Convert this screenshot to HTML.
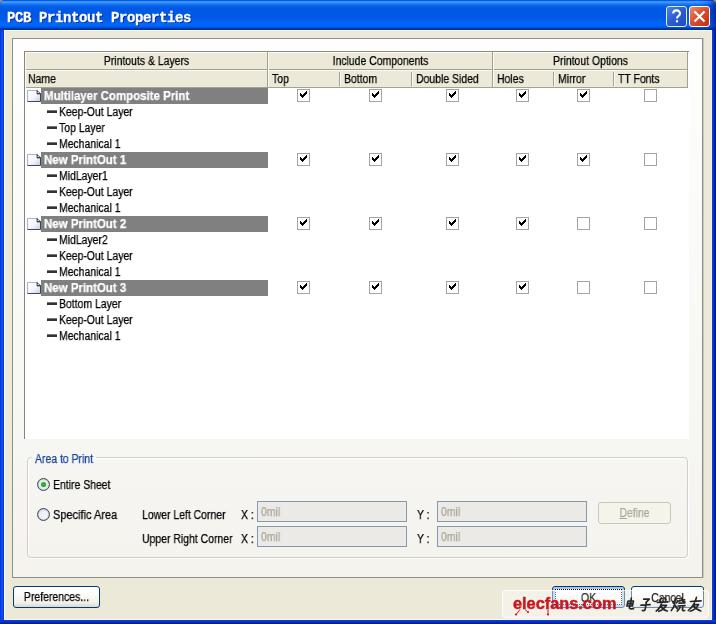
<!DOCTYPE html>
<html>
<head>
<meta charset="utf-8">
<title>PCB Printout Properties</title>
<style>
html,body{margin:0;padding:0;}
body{width:716px;height:624px;overflow:hidden;background:#8c8e8c;font-family:"Liberation Sans",sans-serif;font-size:12.5px;color:#000;position:relative;}
#win{position:absolute;left:0;top:0;width:716px;height:624px;background:#0831d9;overflow:hidden;border-radius:5px 5px 0 0;}
#bl{position:absolute;left:0;top:30px;width:4px;height:594px;background:linear-gradient(to right,#0030d0 0%,#0c48ee 35%,#0c48ee 65%,#0634d4 100%);}
#br{position:absolute;left:712px;top:30px;width:4px;height:594px;background:linear-gradient(to right,#1446e4 0%,#0a30cc 35%,#0020a8 70%,#00178f 100%);}
#bb{position:absolute;left:0;top:620px;width:716px;height:4px;background:linear-gradient(to bottom,#0c3cdc 0%,#0a34d0 35%,#0024b0 70%,#001890 100%);}
#titlebar{position:absolute;left:0;top:0;width:716px;height:30px;
 background:linear-gradient(to bottom,#0055d4 0px,#0a5cdc 1px,#3993ff 1.500px,#3993ff 2.600px,#1a78f4 4px,#0560e8 6px,#0058e4 9px,#0058e6 18px,#0060f0 21px,#0068fc 24px,#0066fa 26px,#0052e0 27.500px,#0038b4 28.500px,#002c94 30px);
 border-radius:5px 5px 0 0;}
#tbr{position:absolute;left:700px;top:0;width:16px;height:30px;background:linear-gradient(to right,rgba(0,30,160,0) 0%,rgba(0,30,160,0.25) 60%,rgba(0,24,140,0.7) 100%);}
#title{position:absolute;left:7px;top:10px;will-change:transform;-webkit-text-stroke:0.3px #fff;font-family:"Liberation Mono",monospace;font-weight:bold;font-size:14px;letter-spacing:-0.4px;line-height:16px;color:#fff;white-space:pre;text-shadow:1px 1px 0 #0a2a90;}
#client{position:absolute;left:4px;top:30px;width:708px;height:590px;background:#ece9d8;box-sizing:border-box;border:1px solid #f9faf6;border-right-color:#eef2f6;}
#panel{position:absolute;left:12px;top:38px;width:691px;height:540px;background:linear-gradient(to bottom,#fefefe 0%,#f8f8f5 55%,#f4f3ee 100%);border:1px solid #8f8f8a;box-sizing:border-box;box-shadow:1px 0 0 #c9c7bc;}
#list{position:absolute;left:24px;top:51px;width:665px;height:388px;background:#fff;box-sizing:border-box;border-left:1px solid #84837c;border-top:1px solid #8c8b82;}
.tb{position:absolute;top:6px;width:21px;height:21px;box-sizing:border-box;border:1px solid #fff;border-radius:3px;}
#bh{left:666px;background:linear-gradient(135deg,#4a82ee 0%,#2a5bd6 50%,#1f48c0 100%);border-color:#dfeafc;}
#bx{left:689px;background:linear-gradient(135deg,#ee8a6c 0%,#d9502f 45%,#bf3111 100%);}

.hdr{position:absolute;background:#ece9d8;box-sizing:border-box;border-right:1px solid #aca899;border-bottom:1px solid #aca899;border-top:1px solid #fff;border-left:1px solid #fff;height:18px;}
.t{position:absolute;white-space:nowrap;will-change:transform;-webkit-text-stroke-width:0.25px;font-size:12.5px;line-height:16px;height:16px;transform:scaleX(0.835);transform-origin:0 50%;}
.tc{transform-origin:50% 50%;text-align:center;}
.bar{position:absolute;left:41px;width:227px;height:16px;background:#808080;}
.bt{position:absolute;left:44px;will-change:transform;-webkit-text-stroke-width:0.25px;color:#fff;font-weight:bold;font-size:12.5px;line-height:16px;height:16px;white-space:nowrap;transform:scaleX(0.917);transform-origin:0 50%;}
.dash{position:absolute;left:47px;width:10px;height:2px;background:#333;border-top:1px solid #777;}
.cb{position:absolute;width:13px;height:13px;box-sizing:border-box;border:1px solid #a5a5a0;background:#fff;}
.cb svg{position:absolute;left:2px;top:0px;display:block;}
.pg{position:absolute;left:27px;width:14px;height:12px;}
.gb{position:absolute;left:27px;top:457px;width:661px;height:101px;box-sizing:border-box;border:1px solid #d0d0c4;border-radius:4px;box-shadow:1px 1px 0 #fff, inset 1px 1px 0 #fff;}
.gbl{position:absolute;left:32px;top:455px;width:64px;height:5px;background:#f7f7f3;}
.blue{color:#17409a;}
.radio{position:absolute;width:13px;height:13px;box-sizing:border-box;border-radius:50%;border:1px solid #3b4c5c;box-shadow:inset 0 0 1px #3b4c5c;background:radial-gradient(circle at 60% 60%,#f4f6fa 0%,#e9ecf2 55%,#dcdfe6 100%);}
.radio.on{background:radial-gradient(circle at 50% 50%,#c9e8c9 0%,#e6f2e6 55%,#eef2ee 100%);}
.radio i{position:absolute;left:3px;top:3px;width:5px;height:5px;border-radius:50%;background:radial-gradient(circle at 45% 40%,#4cb456 0%,#2f9440 60%,#2a8438 100%);}
.inp{position:absolute;width:150px;height:21px;box-sizing:border-box;border:1px solid #8499ae;background:#ebeae6;}
.gt{color:#aca899;}
.btn{position:absolute;width:73px;height:22px;box-sizing:border-box;border:1px solid #003c74;border-radius:3px;background:linear-gradient(to bottom,#ffffff 0%,#fbfbf8 40%,#f1f0e8 80%,#dcd8cb 100%);}
.btn.dis{border-color:#c9c7ba;background:#f5f4ea;}
.btn.def{box-shadow:inset 0 0 0 2px #a9c4ee;}
.focus{position:absolute;box-sizing:border-box;border:1px dotted #000;}
.wm{position:absolute;left:502px;top:590px;width:207px;height:28px;box-sizing:border-box;background:rgba(255,255,255,0.42);border:1px solid rgba(255,255,255,0.8);border-radius:4px;}
.wmt{position:absolute;left:513px;top:594px;font-weight:bold;font-size:16px;line-height:20px;height:20px;color:#c9161f;white-space:nowrap;transform-origin:0 50%;transform:scaleX(1.02);will-change:transform;letter-spacing:0px;-webkit-text-stroke:0.45px #c9161f;}
.bt2{color:#2a2a2a;}
</style>
</head>
<body>
<div id="win">
<div id="titlebar"></div><div id="tbr"></div>
<div id="title">PCB Printout Properties</div>
<div id="bl"></div><div id="br"></div><div id="bb"></div>
<div id="client"></div>
<div class="tb" id="bh"><svg width="19" height="19" viewBox="0 0 19 19"><path d="M6.2 6.6c0-2 1.4-3.2 3.4-3.2s3.4 1.2 3.4 3c0 1.500-.9 2.200-1.900 2.900-.8.600-1.100 1-1.100 2.200" fill="none" stroke="#fff" stroke-width="2.100"/><rect x="8.900" y="13.200" width="2.200" height="2.200" fill="#fff"/></svg></div>
<div class="tb" id="bx"><svg width="19" height="19" viewBox="0 0 19 19"><path d="M4.500 4.500l10 10M14.500 4.500l-10 10" fill="none" stroke="#fff" stroke-width="2.200"/></svg></div>
<div id="panel"></div>
<div id="list"></div>
<div style="position:absolute;left:25px;top:52px;width:663px;height:36px;background:#ece9d8"></div>
<div style="position:absolute;left:25px;top:52px;width:663px;height:1px;background:#fbfaf4"></div>
<div style="position:absolute;left:25px;top:69px;width:663px;height:1px;background:#a4a192"></div>
<div style="position:absolute;left:25px;top:70px;width:663px;height:1px;background:#fbfaf4"></div>
<div style="position:absolute;left:25px;top:87px;width:663px;height:1px;background:#a4a192"></div>
<div style="position:absolute;left:25px;top:52px;width:1px;height:36px;background:#fbfaf4"></div>
<div style="position:absolute;left:267px;top:52px;width:1px;height:36px;background:#a4a192"></div>
<div style="position:absolute;left:268px;top:52px;width:1px;height:35px;background:#fbfaf4"></div>
<div style="position:absolute;left:492px;top:52px;width:1px;height:36px;background:#a4a192"></div>
<div style="position:absolute;left:493px;top:52px;width:1px;height:35px;background:#fbfaf4"></div>
<div style="position:absolute;left:687px;top:52px;width:1px;height:36px;background:#a4a192"></div>
<div style="position:absolute;left:339px;top:72px;width:1px;height:14px;background:#a4a192"></div>
<div style="position:absolute;left:340px;top:72px;width:1px;height:14px;background:#fbfaf4"></div>
<div style="position:absolute;left:411px;top:72px;width:1px;height:14px;background:#a4a192"></div>
<div style="position:absolute;left:412px;top:72px;width:1px;height:14px;background:#fbfaf4"></div>
<div style="position:absolute;left:553px;top:72px;width:1px;height:14px;background:#a4a192"></div>
<div style="position:absolute;left:554px;top:72px;width:1px;height:14px;background:#fbfaf4"></div>
<div style="position:absolute;left:613px;top:72px;width:1px;height:14px;background:#a4a192"></div>
<div style="position:absolute;left:614px;top:72px;width:1px;height:14px;background:#fbfaf4"></div>
<div class="t tc" style="left:25px;top:53px;width:243px">Printouts &amp; Layers</div>
<div class="t tc" style="left:268px;top:53px;width:225px">Include Components</div>
<div class="t tc" style="left:493px;top:53px;width:195px">Printout Options</div>
<div class="t" style="left:28px;top:71px">Name</div>
<div class="t" style="left:272px;top:71px">Top</div>
<div class="t" style="left:344px;top:71px">Bottom</div>
<div class="t" style="left:416px;top:71px">Double Sided</div>
<div class="t" style="left:497px;top:71px">Holes</div>
<div class="t" style="left:558px;top:71px">Mirror</div>
<div class="t" style="left:618px;top:71px">TT Fonts</div>
<div class="bar" style="top:88px"></div>
<svg class="pg" style="top:90px" width="14" height="12" viewBox="0 0 14 12"><defs><linearGradient id="pgg" x1="0" y1="0" x2="1" y2="1"><stop offset="0" stop-color="#ffffff"/><stop offset="0.55" stop-color="#f3f6fb"/><stop offset="1" stop-color="#c3ccdd"/></linearGradient></defs><path d="M0.5 0.5h10l3 3v8h-13z" fill="url(#pgg)" stroke="#a9b2c4" stroke-width="1"/><path d="M13.5 3.5v8h-13" fill="none" stroke="#3d4560" stroke-width="1"/><path d="M10 0.5l3.5 3.500h-3.500z" fill="#3d4560" stroke="#30384e" stroke-width="0.800"/><rect x="10.600" y="1.800" width="1.200" height="1.200" fill="#f4f6fa"/></svg>
<div class="bt" style="top:88px">Multilayer Composite Print</div>
<div class="cb" style="left:297px;top:89px"><svg width="7" height="9" viewBox="0 0 7 9" shape-rendering="crispEdges"><path d="M0 3h1v3h-1zM1 4h1v3h-1zM2 5h1v3h-1zM3 4h1v3h-1zM4 3h1v3h-1zM5 2h1v3h-1zM6 1h1v3h-1z" fill="#000"/></svg></div>
<div class="cb" style="left:369px;top:89px"><svg width="7" height="9" viewBox="0 0 7 9" shape-rendering="crispEdges"><path d="M0 3h1v3h-1zM1 4h1v3h-1zM2 5h1v3h-1zM3 4h1v3h-1zM4 3h1v3h-1zM5 2h1v3h-1zM6 1h1v3h-1z" fill="#000"/></svg></div>
<div class="cb" style="left:446px;top:89px"><svg width="7" height="9" viewBox="0 0 7 9" shape-rendering="crispEdges"><path d="M0 3h1v3h-1zM1 4h1v3h-1zM2 5h1v3h-1zM3 4h1v3h-1zM4 3h1v3h-1zM5 2h1v3h-1zM6 1h1v3h-1z" fill="#000"/></svg></div>
<div class="cb" style="left:516px;top:89px"><svg width="7" height="9" viewBox="0 0 7 9" shape-rendering="crispEdges"><path d="M0 3h1v3h-1zM1 4h1v3h-1zM2 5h1v3h-1zM3 4h1v3h-1zM4 3h1v3h-1zM5 2h1v3h-1zM6 1h1v3h-1z" fill="#000"/></svg></div>
<div class="cb" style="left:577px;top:89px"><svg width="7" height="9" viewBox="0 0 7 9" shape-rendering="crispEdges"><path d="M0 3h1v3h-1zM1 4h1v3h-1zM2 5h1v3h-1zM3 4h1v3h-1zM4 3h1v3h-1zM5 2h1v3h-1zM6 1h1v3h-1z" fill="#000"/></svg></div>
<div class="cb" style="left:644px;top:89px"></div>
<div class="dash" style="top:110px"></div>
<div class="t" style="left:59px;top:104px">Keep-Out Layer</div>
<div class="dash" style="top:126px"></div>
<div class="t" style="left:59px;top:120px">Top Layer</div>
<div class="dash" style="top:142px"></div>
<div class="t" style="left:59px;top:136px">Mechanical 1</div>
<div class="bar" style="top:152px"></div>
<svg class="pg" style="top:154px" width="14" height="12" viewBox="0 0 14 12"><defs><linearGradient id="pgg" x1="0" y1="0" x2="1" y2="1"><stop offset="0" stop-color="#ffffff"/><stop offset="0.55" stop-color="#f3f6fb"/><stop offset="1" stop-color="#c3ccdd"/></linearGradient></defs><path d="M0.5 0.5h10l3 3v8h-13z" fill="url(#pgg)" stroke="#a9b2c4" stroke-width="1"/><path d="M13.5 3.5v8h-13" fill="none" stroke="#3d4560" stroke-width="1"/><path d="M10 0.5l3.5 3.500h-3.500z" fill="#3d4560" stroke="#30384e" stroke-width="0.800"/><rect x="10.600" y="1.800" width="1.200" height="1.200" fill="#f4f6fa"/></svg>
<div class="bt" style="top:152px">New PrintOut 1</div>
<div class="cb" style="left:297px;top:153px"><svg width="7" height="9" viewBox="0 0 7 9" shape-rendering="crispEdges"><path d="M0 3h1v3h-1zM1 4h1v3h-1zM2 5h1v3h-1zM3 4h1v3h-1zM4 3h1v3h-1zM5 2h1v3h-1zM6 1h1v3h-1z" fill="#000"/></svg></div>
<div class="cb" style="left:369px;top:153px"><svg width="7" height="9" viewBox="0 0 7 9" shape-rendering="crispEdges"><path d="M0 3h1v3h-1zM1 4h1v3h-1zM2 5h1v3h-1zM3 4h1v3h-1zM4 3h1v3h-1zM5 2h1v3h-1zM6 1h1v3h-1z" fill="#000"/></svg></div>
<div class="cb" style="left:446px;top:153px"><svg width="7" height="9" viewBox="0 0 7 9" shape-rendering="crispEdges"><path d="M0 3h1v3h-1zM1 4h1v3h-1zM2 5h1v3h-1zM3 4h1v3h-1zM4 3h1v3h-1zM5 2h1v3h-1zM6 1h1v3h-1z" fill="#000"/></svg></div>
<div class="cb" style="left:516px;top:153px"><svg width="7" height="9" viewBox="0 0 7 9" shape-rendering="crispEdges"><path d="M0 3h1v3h-1zM1 4h1v3h-1zM2 5h1v3h-1zM3 4h1v3h-1zM4 3h1v3h-1zM5 2h1v3h-1zM6 1h1v3h-1z" fill="#000"/></svg></div>
<div class="cb" style="left:577px;top:153px"><svg width="7" height="9" viewBox="0 0 7 9" shape-rendering="crispEdges"><path d="M0 3h1v3h-1zM1 4h1v3h-1zM2 5h1v3h-1zM3 4h1v3h-1zM4 3h1v3h-1zM5 2h1v3h-1zM6 1h1v3h-1z" fill="#000"/></svg></div>
<div class="cb" style="left:644px;top:153px"></div>
<div class="dash" style="top:174px"></div>
<div class="t" style="left:59px;top:168px">MidLayer1</div>
<div class="dash" style="top:190px"></div>
<div class="t" style="left:59px;top:184px">Keep-Out Layer</div>
<div class="dash" style="top:206px"></div>
<div class="t" style="left:59px;top:200px">Mechanical 1</div>
<div class="bar" style="top:216px"></div>
<svg class="pg" style="top:218px" width="14" height="12" viewBox="0 0 14 12"><defs><linearGradient id="pgg" x1="0" y1="0" x2="1" y2="1"><stop offset="0" stop-color="#ffffff"/><stop offset="0.55" stop-color="#f3f6fb"/><stop offset="1" stop-color="#c3ccdd"/></linearGradient></defs><path d="M0.5 0.5h10l3 3v8h-13z" fill="url(#pgg)" stroke="#a9b2c4" stroke-width="1"/><path d="M13.5 3.5v8h-13" fill="none" stroke="#3d4560" stroke-width="1"/><path d="M10 0.5l3.5 3.500h-3.500z" fill="#3d4560" stroke="#30384e" stroke-width="0.800"/><rect x="10.600" y="1.800" width="1.200" height="1.200" fill="#f4f6fa"/></svg>
<div class="bt" style="top:216px">New PrintOut 2</div>
<div class="cb" style="left:297px;top:217px"><svg width="7" height="9" viewBox="0 0 7 9" shape-rendering="crispEdges"><path d="M0 3h1v3h-1zM1 4h1v3h-1zM2 5h1v3h-1zM3 4h1v3h-1zM4 3h1v3h-1zM5 2h1v3h-1zM6 1h1v3h-1z" fill="#000"/></svg></div>
<div class="cb" style="left:369px;top:217px"><svg width="7" height="9" viewBox="0 0 7 9" shape-rendering="crispEdges"><path d="M0 3h1v3h-1zM1 4h1v3h-1zM2 5h1v3h-1zM3 4h1v3h-1zM4 3h1v3h-1zM5 2h1v3h-1zM6 1h1v3h-1z" fill="#000"/></svg></div>
<div class="cb" style="left:446px;top:217px"><svg width="7" height="9" viewBox="0 0 7 9" shape-rendering="crispEdges"><path d="M0 3h1v3h-1zM1 4h1v3h-1zM2 5h1v3h-1zM3 4h1v3h-1zM4 3h1v3h-1zM5 2h1v3h-1zM6 1h1v3h-1z" fill="#000"/></svg></div>
<div class="cb" style="left:516px;top:217px"><svg width="7" height="9" viewBox="0 0 7 9" shape-rendering="crispEdges"><path d="M0 3h1v3h-1zM1 4h1v3h-1zM2 5h1v3h-1zM3 4h1v3h-1zM4 3h1v3h-1zM5 2h1v3h-1zM6 1h1v3h-1z" fill="#000"/></svg></div>
<div class="cb" style="left:577px;top:217px"></div>
<div class="cb" style="left:644px;top:217px"></div>
<div class="dash" style="top:238px"></div>
<div class="t" style="left:59px;top:232px">MidLayer2</div>
<div class="dash" style="top:254px"></div>
<div class="t" style="left:59px;top:248px">Keep-Out Layer</div>
<div class="dash" style="top:270px"></div>
<div class="t" style="left:59px;top:264px">Mechanical 1</div>
<div class="bar" style="top:280px"></div>
<svg class="pg" style="top:282px" width="14" height="12" viewBox="0 0 14 12"><defs><linearGradient id="pgg" x1="0" y1="0" x2="1" y2="1"><stop offset="0" stop-color="#ffffff"/><stop offset="0.55" stop-color="#f3f6fb"/><stop offset="1" stop-color="#c3ccdd"/></linearGradient></defs><path d="M0.5 0.5h10l3 3v8h-13z" fill="url(#pgg)" stroke="#a9b2c4" stroke-width="1"/><path d="M13.5 3.5v8h-13" fill="none" stroke="#3d4560" stroke-width="1"/><path d="M10 0.5l3.5 3.500h-3.500z" fill="#3d4560" stroke="#30384e" stroke-width="0.800"/><rect x="10.600" y="1.800" width="1.200" height="1.200" fill="#f4f6fa"/></svg>
<div class="bt" style="top:280px">New PrintOut 3</div>
<div class="cb" style="left:297px;top:281px"><svg width="7" height="9" viewBox="0 0 7 9" shape-rendering="crispEdges"><path d="M0 3h1v3h-1zM1 4h1v3h-1zM2 5h1v3h-1zM3 4h1v3h-1zM4 3h1v3h-1zM5 2h1v3h-1zM6 1h1v3h-1z" fill="#000"/></svg></div>
<div class="cb" style="left:369px;top:281px"><svg width="7" height="9" viewBox="0 0 7 9" shape-rendering="crispEdges"><path d="M0 3h1v3h-1zM1 4h1v3h-1zM2 5h1v3h-1zM3 4h1v3h-1zM4 3h1v3h-1zM5 2h1v3h-1zM6 1h1v3h-1z" fill="#000"/></svg></div>
<div class="cb" style="left:446px;top:281px"><svg width="7" height="9" viewBox="0 0 7 9" shape-rendering="crispEdges"><path d="M0 3h1v3h-1zM1 4h1v3h-1zM2 5h1v3h-1zM3 4h1v3h-1zM4 3h1v3h-1zM5 2h1v3h-1zM6 1h1v3h-1z" fill="#000"/></svg></div>
<div class="cb" style="left:516px;top:281px"><svg width="7" height="9" viewBox="0 0 7 9" shape-rendering="crispEdges"><path d="M0 3h1v3h-1zM1 4h1v3h-1zM2 5h1v3h-1zM3 4h1v3h-1zM4 3h1v3h-1zM5 2h1v3h-1zM6 1h1v3h-1z" fill="#000"/></svg></div>
<div class="cb" style="left:577px;top:281px"></div>
<div class="cb" style="left:644px;top:281px"></div>
<div class="dash" style="top:302px"></div>
<div class="t" style="left:59px;top:296px">Bottom Layer</div>
<div class="dash" style="top:318px"></div>
<div class="t" style="left:59px;top:312px">Keep-Out Layer</div>
<div class="dash" style="top:334px"></div>
<div class="t" style="left:59px;top:328px">Mechanical 1</div>
<div class="gb"></div>
<div class="gbl"></div>
<div class="t blue" style="left:35px;top:451px">Area to Print</div>
<div class="radio on" style="left:37px;top:478px"><i></i></div>
<div class="t" style="left:53px;top:477px">Entire Sheet</div>
<div class="radio" style="left:37px;top:508px"></div>
<div class="t" style="left:53px;top:507px;transform:scaleX(0.88)">Specific Area</div>
<div class="t" style="left:142px;top:507px">Lower Left Corner</div>
<div class="t" style="left:142px;top:531px">Upper Right Corner</div>
<div class="t" style="left:241px;top:507px">X :</div>
<div class="t" style="left:241px;top:531px">X :</div>
<div class="t" style="left:417px;top:507px">Y :</div>
<div class="t" style="left:417px;top:531px">Y :</div>
<div class="inp" style="left:257px;top:501px"></div>
<div class="inp" style="left:257px;top:526px"></div>
<div class="inp" style="left:437px;top:501px"></div>
<div class="inp" style="left:437px;top:526px"></div>
<div class="t gt" style="left:261px;top:504px">0mil</div>
<div class="t gt" style="left:261px;top:529px">0mil</div>
<div class="t gt" style="left:441px;top:504px">0mil</div>
<div class="t gt" style="left:441px;top:529px">0mil</div>
<div class="btn dis" style="left:598px;top:502px"></div>
<div class="t tc gt" style="left:598px;top:505px;width:73px"><u>D</u>efine</div>
<div class="btn" style="left:13px;top:586px;width:87px"></div>
<div class="t tc" style="left:13px;top:589px;width:87px">Preferences...</div>
<div class="btn def" style="left:552px;top:586px"></div>
<div class="focus" style="left:555px;top:589px;width:67px;height:16px"></div>
<div class="btn" style="left:631px;top:586px"></div>
<div class="wm"></div>
<div class="t tc bt2" style="left:552px;top:590px;width:73px">OK</div>
<div class="t tc bt2" style="left:631px;top:590px;width:73px">Cancel</div>
<div class="wmt">elecfans.com</div>
<svg style="position:absolute;left:502px;top:590px" width="210" height="28" viewBox="0 0 210 28">
<g stroke="#c9161f" stroke-width="1" fill="#c9161f" transform="translate(0,1)">
<path d="M18 18.500L14.500 23"/><circle cx="14" cy="23.500" r="1.100" stroke="none"/>
<path d="M23 18.500L25.500 20.500"/><circle cx="26" cy="21" r="1.100" stroke="none"/>
<path d="M46 18.500V23"/><circle cx="46" cy="23.500" r="1.100" stroke="none"/>
<circle cx="81" cy="14" r="1" stroke="none"/>
</g>
</svg>
<svg style="position:absolute;left:620px;top:590px" width="92" height="28" viewBox="620 590 92 28">
<g fill="none" stroke="#262626" stroke-width="1.700" stroke-linecap="round" stroke-linejoin="round" transform="translate(74.300,0) skewX(-7)">
<path d="M627.500 601h5.500l-.5 5h-5.500zM627.200 603.600h5.500M630.500 598l-.8 9.500q0 1.800 4.300 1.200"/>
<path d="M643 599.200h5.500l-2.800 3.200M646 602.200l-.3 7q-.2 2 -2.700 1.300M641 605.200l9-.6"/>
<path d="M660.500 598l-1.500 4M657 602.500l10.500-.6M664 598l1.300 2M661.500 602.500q-1 6 -4.500 8.500M661.500 605.300h5q-2.500 4.500 -7 6M661 606.300q3 4 7 4.700"/>
<path d="M674.500 598v6q-.5 4 -2.500 6.500M672.300 601.500l.9 1.600M677.300 600.800l-1 2M674.800 605l2.700 3.500M679 600.300l5-.4M681 598q.2 3 3.500 4M678.800 603.200l5.700-.4M678 606l7-.4M680.500 606q0 3 -2.500 5M683 606v3.500q0 1.500 2.300 1"/>
<path d="M690 601.500l10.500-.7M695.500 597.300q-1 8 -6.500 13.200M693.500 604.600h5q-2.500 5 -7.500 6.600M693.500 605.600q3 4 8 5.400"/>
</g>
</svg>

</div>
</body>
</html>
